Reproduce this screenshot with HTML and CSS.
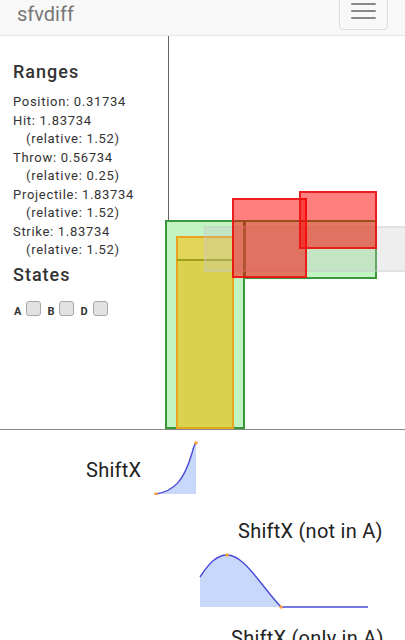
FILE: index.html
```html
<!DOCTYPE HTML>
<html>
<head>
    <title>sfvdiff</title>
    <link rel="stylesheet" href="styles.css">
</head>

<body>
    <div class="navbar">
        <span class="brand">sfvdiff</span>
        <button class="toggle" type="button">
            <span class="bar"></span>
            <span class="bar"></span>
            <span class="bar"></span>
        </button>
    </div>

    <div class="main">
        <div class="side">
            <h3 class="title">Ranges</h3>
            <div class="ranges">
                <div>Position: 0.31734</div>
                <div>Hit: 1.83734</div>
                <div class="rel">(relative: 1.52)</div>
                <div>Throw: 0.56734</div>
                <div class="rel">(relative: 0.25)</div>
                <div>Projectile: 1.83734</div>
                <div class="rel">(relative: 1.52)</div>
                <div>Strike: 1.83734</div>
                <div class="rel">(relative: 1.52)</div>
            </div>
            <h3 class="title states">States</h3>
            <div class="checks">
                <label class="lbl">A</label><input type="checkbox" class="cb" />
                <label class="lbl">B</label><input type="checkbox" class="cb" />
                <label class="lbl">D</label><input type="checkbox" class="cb" />
            </div>
        </div>

        <div class="stage">
            <div class="box green" style="left:-4px; top:184px; width:80px; bottom:0;"></div>
            <div class="box green" style="left:75px; top:184px; width:133px; height:59px;"></div>
            <div class="box yellow" style="left:7px; top:200px; width:58px; bottom:0;"></div>
            <div class="box olive" style="left:8px; top:223px; width:56px; bottom:0;"></div>
            <div class="box grey" style="left:35px; top:190px; width:220px; height:46px;"></div>
            <div class="box red" style="left:63px; top:162px; width:75px; height:80px;"></div>
            <div class="box red" style="left:130px; top:155px; width:78px; height:58px;"></div>
        </div>
    </div>

    <div class="graphs">
        <div class="row row1">
            <span class="glabel">ShiftX</span>
            <svg class="plot" width="44" height="54" viewBox="0 0 44 54">
                <path class="area" d="M2,53 C20,50 30,40 38,12 Q40,4 42,2 L42,53 Z" />
                <path class="line" d="M2,53 C20,50 30,40 38,12 Q40,4 42,2" />
                <circle class="dot" cx="2" cy="53" r="1.8" />
                <circle class="dot" cx="42" cy="2" r="1.8" />
            </svg>
        </div>

        <div class="row2">
            <div class="glabel">ShiftX (not in A)</div>
            <svg class="plot wide" width="170" height="56" viewBox="0 0 170 56">
                <path class="area" d="M1,54 L1,24 C10,10 18,2 28,2 C45,2 60,30 82,54 Z" />
                <path class="line" d="M1,24 C10,10 18,2 28,2 C45,2 60,30 82,54 L169,54" />
                <circle class="dot" cx="28" cy="2" r="1.8" />
                <circle class="dot" cx="82" cy="54" r="1.8" />
            </svg>
        </div>

        <div class="row3">
            <div class="glabel">ShiftX (only in A)</div>
        </div>
    </div>
</body>

</html>
```

FILE: styles.css
```css
body {
    margin: 0;
    font-family: Roboto, "Liberation Sans", sans-serif;
    color: #333;
    overflow: hidden;
}

.navbar {
    height: 35px;
    background: #f8f8f8;
    border-bottom: 1px solid #e7e7e7;
    display: flex;
    align-items: flex-start;
    justify-content: space-between;
}

.brand {
    font-size: 20px;
    line-height: 20px;
    color: #777;
    margin: 4px 0 0 17px;
}

.toggle {
    width: 49px;
    height: 40px;
    margin: -10px 17px 0 0;
    padding: 0;
    background: transparent;
    border: 1px solid #ddd;
    border-radius: 4px;
    display: flex;
    flex-direction: column;
    align-items: center;
    justify-content: flex-end;
    gap: 5px;
    padding-bottom: 10px;
    box-sizing: border-box;
}

.bar {
    display: block;
    width: 25px;
    height: 2px;
    background: #888;
    border-radius: 1px;
}

.main {
    display: flex;
    height: 393px;
    border-bottom: 1px solid #888;
}

.side {
    width: 155px;
    padding: 26px 0 0 13px;
}

.title {
    margin: 0 0 11px 0;
    font-size: 18px;
    line-height: 20px;
    font-weight: 500;
    letter-spacing: 1px;
}

.states {
    margin: 5px 0 0 0;
}

.ranges {
    font-size: 13px;
    line-height: 18.5px;
    letter-spacing: 0.7px;
}

.rel {
    padding-left: 13px;
}

.checks {
    display: flex;
    align-items: flex-end;
    margin-top: 16px;
}

.lbl {
    font-size: 11px;
    font-weight: bold;
    line-height: 10px;
    margin: 0 0 -1px 1px;
}

.cb {
    -webkit-appearance: none;
    appearance: none;
    width: 15px;
    height: 15px;
    margin: 0 5px 0 5px;
    border: 1px solid #a8a8a8;
    border-radius: 3px;
    background: #e2e2e2;
    box-sizing: border-box;
}

.stage {
    flex: 1;
    position: relative;
    border-left: 1px solid #666;
}

.box {
    position: absolute;
    box-sizing: border-box;
}

.green {
    background: #c2f3c2;
    border: 2px solid #3a983a;
}

.yellow {
    background: rgba(240, 200, 40, 0.68);
    border: 2px solid #eaa31e;
}

.olive {
    background: rgba(190, 190, 40, 0.2);
    border-top: 2px solid rgba(140, 140, 0, 0.75);
}

.grey {
    background: rgba(200, 200, 200, 0.3);
    border: 2px solid rgba(200, 200, 200, 0.35);
}

.red {
    background: rgba(255, 0, 0, 0.5);
    border: 2px solid rgba(235, 20, 20, 0.9);
}

.graphs {
    color: #222;
}

.glabel {
    font-size: 20px;
    line-height: 20px;
    letter-spacing: 0.25px;
}

.row1 {
    display: flex;
    align-items: flex-start;
    padding-left: 86px;
    margin-top: 11px;
}

.row1 .glabel {
    margin-top: 19px;
}

.row1 .plot {
    margin-left: 13px;
}

.row2 {
    margin-top: 26px;
    padding-left: 238px;
}

.row2 .plot {
    display: block;
    margin: 12px 0 0 -39px;
}

.row3 {
    margin-top: 19px;
    padding-left: 231px;
}

.area {
    fill: #c8d8fa;
}

.line {
    fill: none;
    stroke: #4a4ad6;
    stroke-width: 1.4;
}

.dot {
    fill: #f4a040;
}
```
